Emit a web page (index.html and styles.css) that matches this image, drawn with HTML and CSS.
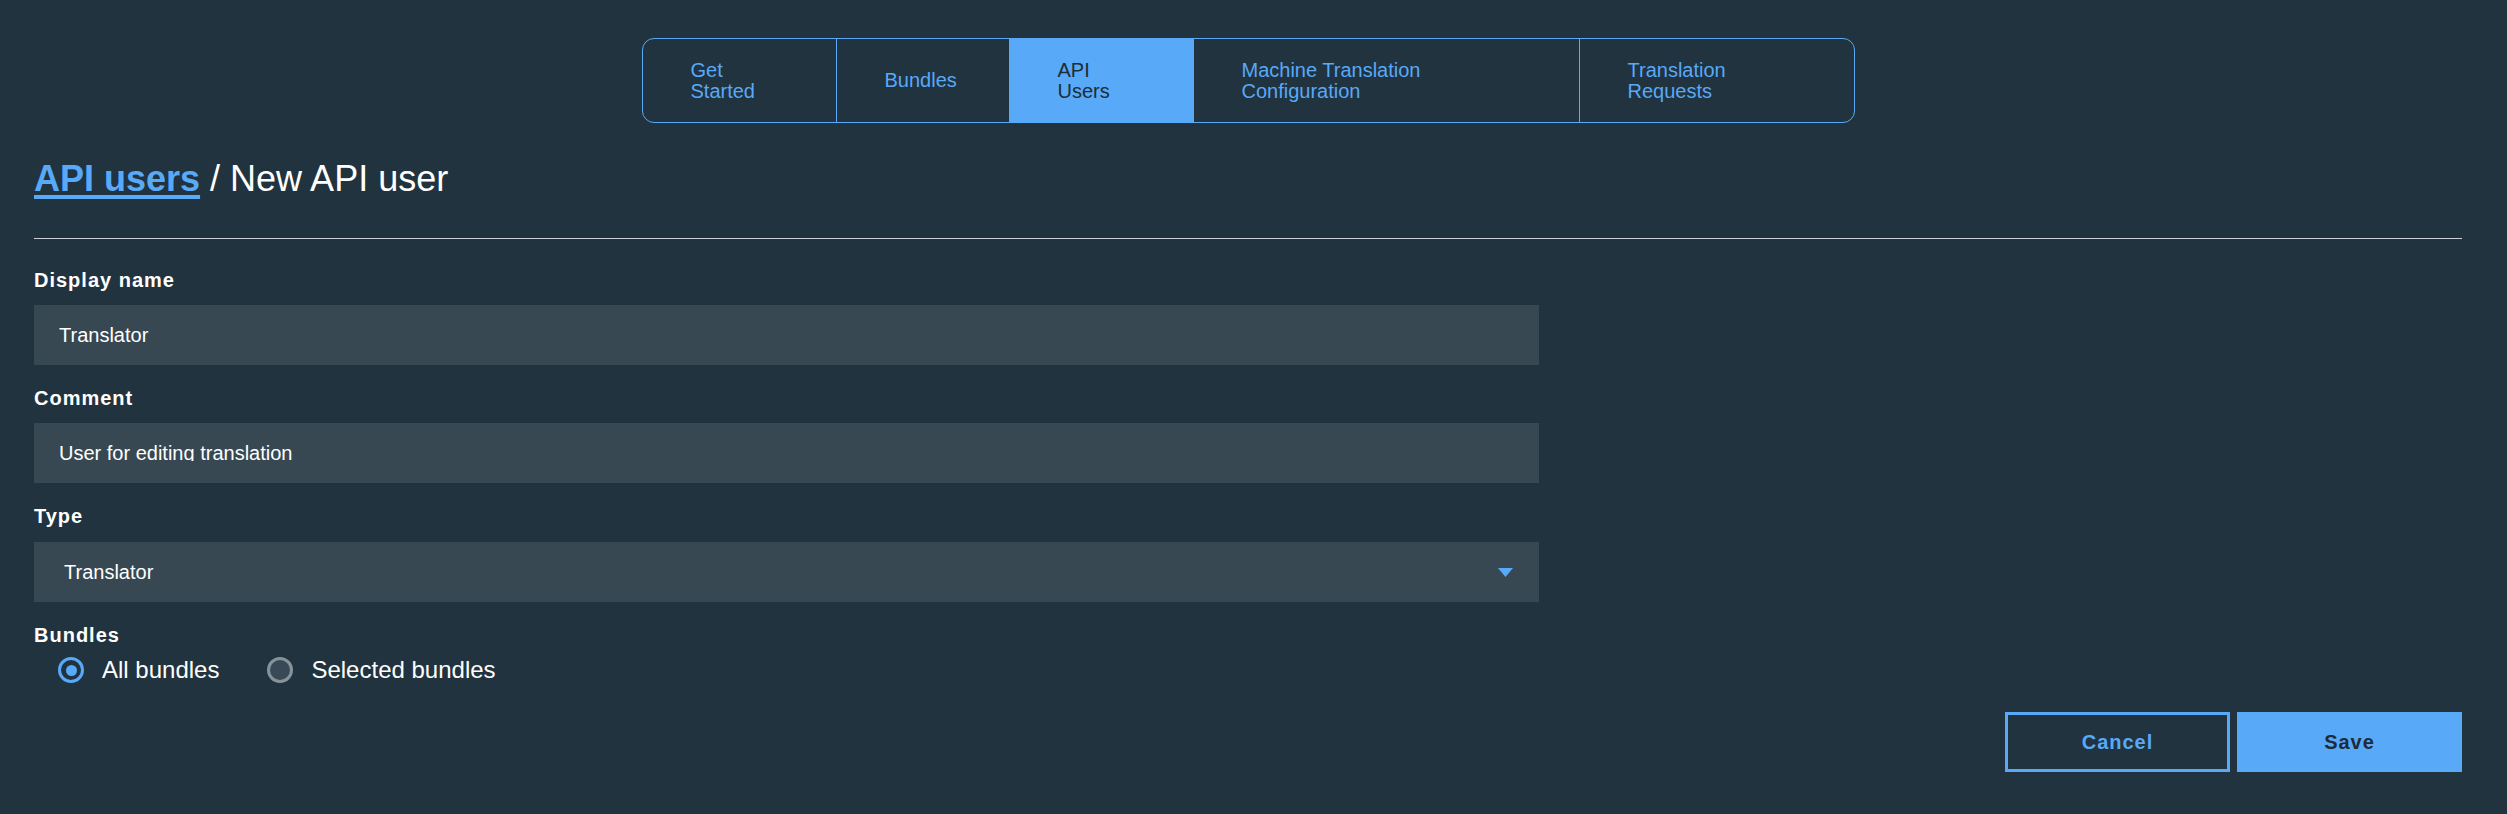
FILE: index.html
```html
<!DOCTYPE html>
<html lang="en">
<head>
<meta charset="utf-8">
<title>New API user</title>
<link rel="stylesheet" href="styles.css">
</head>
<body>
<div class="page">
  <nav class="tabs-wrap">
    <div class="tabs">
      <a class="tab tab-start">Get<br>Started</a>
      <a class="tab tab-bundles">Bundles</a>
      <a class="tab tab-users active">API<br>Users</a>
      <a class="tab tab-mt">Machine Translation<br>Configuration</a>
      <a class="tab tab-req">Translation<br>Requests</a>
    </div>
  </nav>

  <h1 class="title"><a class="crumb">API users</a> / New API user</h1>
  <hr class="rule">

  <form class="form">
    <div class="field">
      <label class="label">Display name</label>
      <div class="input">Translator</div>
    </div>
    <div class="field">
      <label class="label">Comment</label>
      <div class="input textarea"><span class="textarea-line">User for editing translation</span></div>
    </div>
    <div class="field field-type">
      <label class="label">Type</label>
      <div class="input select">
        <span>Translator</span>
        <svg class="caret" width="15" height="9" viewBox="0 0 15 9"><path d="M0 0H15L7.5 9Z" fill="#58a9f8"/></svg>
      </div>
    </div>
    <div class="field field-bundles">
      <label class="label">Bundles</label>
      <div class="radios">
        <span class="radio"><span class="dot checked"></span>All bundles</span>
        <span class="radio"><span class="dot"></span>Selected bundles</span>
      </div>
    </div>
    <div class="actions">
      <button type="button" class="btn btn-cancel">Cancel</button>
      <button type="button" class="btn btn-save">Save</button>
    </div>
  </form>
</div>
</body>
</html>
```

FILE: styles.css
```css
* { box-sizing: border-box; }
html, body {
  margin: 0;
  background: #21333e;
}
body {
  font-family: "Liberation Sans", Arial, sans-serif;
  color: #ffffff;
}
.page {
  padding: 38px 45px 0 34px;
  min-height: 814px;
}
.tabs-wrap {
  display: flex;
  justify-content: center;
}
.tabs {
  display: flex;
  border: 1px solid #58a9f8;
  border-radius: 12px;
  overflow: hidden;
  height: 85px;
}
.tab {
  flex: none;
  display: flex;
  align-items: center;
  padding-left: 48px;
  font-size: 20px;
  line-height: 21px;
  color: #58a9f8;
  border-left: 1px solid #58a9f8;
}
.tab-start { width: 193px; border-left: none; }
.tab-bundles { width: 173px; }
.tab-users { width: 184px; }
.tab-mt { width: 386px; }
.tab-req { width: 275px; }
.tab.active {
  background: #58a9f8;
  color: #1d2d38;
}
.title {
  margin: 35px 0 0;
  font-size: 36px;
  font-weight: normal;
  line-height: 41px;
  color: #ffffff;
}
.crumb {
  font-weight: bold;
  color: #58a9f8;
  text-decoration: underline;
  text-decoration-thickness: 4px;
  text-underline-offset: 4px;
}
.rule {
  margin: 39px 0 0;
  border: none;
  border-top: 1px solid #c9d2d8;
  height: 0;
}
.form {
  padding-top: 30px;
}
.field {
  display: flex;
  flex-direction: column;
  gap: 13px;
  margin-bottom: 22px;
}
.field-type {
  margin-top: 7px;
  gap: 14px;
}
.label {
  font-size: 20px;
  line-height: 23px;
  font-weight: bold;
  letter-spacing: 1px;
}
.input {
  width: 1505px;
  height: 60px;
  background: #374853;
  padding: 0 25px;
  display: flex;
  align-items: center;
  font-size: 20px;
  color: #ffffff;
}
.textarea {
  align-items: flex-start;
}
.textarea-line {
  display: block;
  margin-top: 19px;
  height: 19px;
  line-height: 23px;
  overflow: hidden;
}
.select {
  padding: 0 26px 0 30px;
  justify-content: space-between;
}
.field-bundles {
  gap: 9px;
  margin-bottom: 28px;
}
.radios {
  display: flex;
  align-items: center;
  gap: 48px;
  padding-left: 24px;
}
.radio {
  display: flex;
  align-items: center;
  gap: 18px;
  font-size: 24px;
  line-height: 28px;
}
.dot {
  width: 26px;
  height: 26px;
  border-radius: 50%;
  border: 3px solid #87939b;
  background: #394955;
  display: flex;
  align-items: center;
  justify-content: center;
}
.dot.checked {
  border-color: #58a9f8;
  background: #21333e;
}
.dot.checked::after {
  content: "";
  width: 11px;
  height: 11px;
  border-radius: 50%;
  background: #58a9f8;
}
.actions {
  display: flex;
  justify-content: flex-end;
  gap: 7px;
}
.btn {
  width: 225px;
  height: 60px;
  font-family: "Liberation Sans", Arial, sans-serif;
  font-size: 20px;
  font-weight: bold;
  letter-spacing: 1px;
  border: 3px solid #58a9f8;
  cursor: pointer;
}
.btn-cancel {
  background: #21333e;
  color: #58a9f8;
}
.btn-save {
  background: #58a9f8;
  color: #1d2d38;
}
```
